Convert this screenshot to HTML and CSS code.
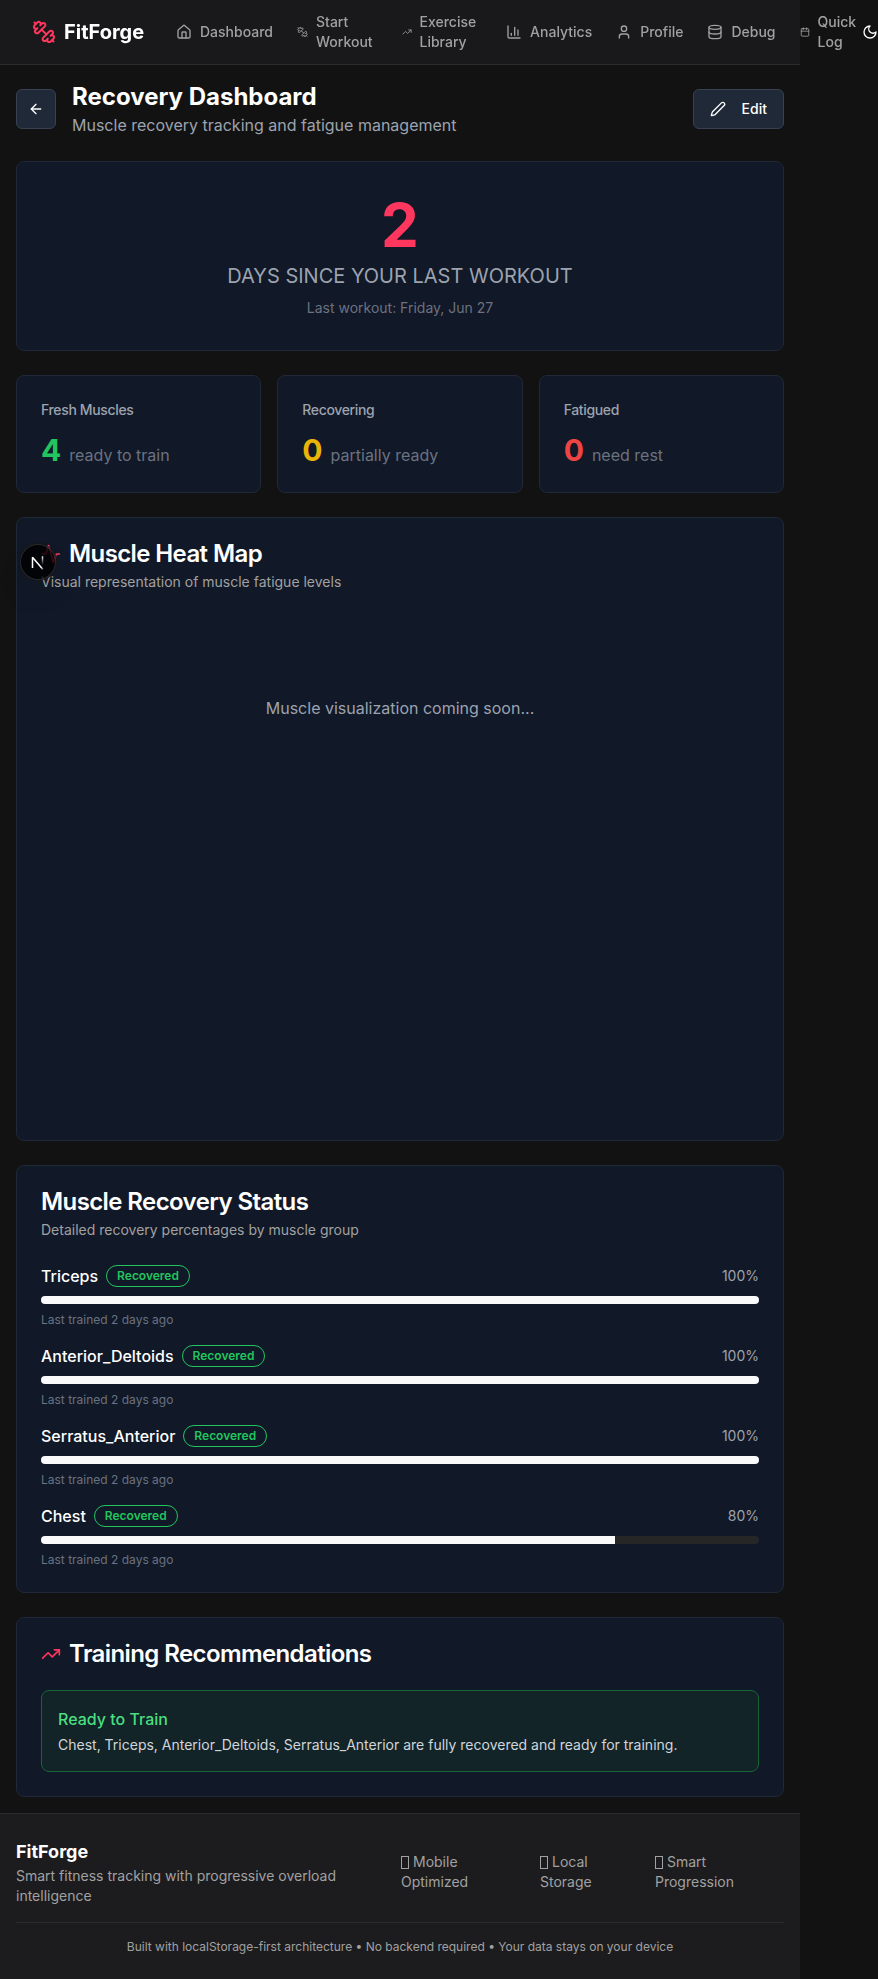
FILE: index.html
```html
<!DOCTYPE html>
<html lang="en">
<head>
<meta charset="utf-8">
<title>FitForge</title>
<link rel="stylesheet" href="styles.css">
</head>
<body>
<svg class="sprite" width="0" height="0">
  <symbol id="dumbbell" viewBox="0 0 24 24"><path d="M14.4 14.4 9.6 9.6"/><path d="M18.657 21.485a2 2 0 1 1-2.829-2.828l-1.767 1.768a2 2 0 1 1-2.829-2.829l6.364-6.364a2 2 0 1 1 2.829 2.829l-1.768 1.767a2 2 0 1 1 2.828 2.829z"/><path d="m21.5 21.5-1.4-1.4"/><path d="M3.9 3.9 2.5 2.5"/><path d="M6.404 12.768a2 2 0 1 1-2.829-2.829l1.768-1.767a2 2 0 1 1-2.828-2.829l2.828-2.828a2 2 0 1 1 2.829 2.828l1.767-1.768a2 2 0 1 1 2.829 2.829z"/></symbol>
  <symbol id="home" viewBox="0 0 24 24"><path d="M15 21v-8a1 1 0 0 0-1-1h-4a1 1 0 0 0-1 1v8"/><path d="M3 10a2 2 0 0 1 .709-1.528l7-5.999a2 2 0 0 1 2.582 0l7 5.999A2 2 0 0 1 21 10v9a2 2 0 0 1-2 2H5a2 2 0 0 1-2-2z"/></symbol>
  <symbol id="trend" viewBox="0 0 24 24"><path d="m22 7-8.500 8.500-5-5L2 17"/><path d="M16 7h6v6"/></symbol>
  <symbol id="chart" viewBox="0 0 24 24"><path d="M3 3v16a2 2 0 0 0 2 2h16"/><path d="M18 17V9"/><path d="M13 17V5"/><path d="M8 17v-3"/></symbol>
  <symbol id="user" viewBox="0 0 24 24"><path d="M19 21v-2a4 4 0 0 0-4-4H9a4 4 0 0 0-4 4v2"/><circle cx="12" cy="7" r="4"/></symbol>
  <symbol id="database" viewBox="0 0 24 24"><ellipse cx="12" cy="5" rx="9" ry="3"/><path d="M3 5v14a9 3 0 0 0 18 0V5"/><path d="M3 12a9 3 0 0 0 18 0"/></symbol>
  <symbol id="calendar" viewBox="0 0 24 24"><path d="M8 2v4"/><path d="M16 2v4"/><rect width="18" height="18" x="3" y="4" rx="2"/><path d="M3 10h18"/></symbol>
  <symbol id="moon" viewBox="0 0 24 24"><path d="M12 3a6 6 0 0 0 9 9 9 9 0 1 1-9-9Z"/></symbol>
  <symbol id="back" viewBox="0 0 24 24"><path d="m12 19-7-7 7-7"/><path d="M19 12H5"/></symbol>
  <symbol id="pencil" viewBox="0 0 24 24"><path d="M21.174 6.812a1 1 0 0 0-3.986-3.987L3.842 16.174a2 2 0 0 0-.5.830l-1.321 4.352a.5.5 0 0 0 .623.622l4.353-1.320a2 2 0 0 0 .830-.497z"/></symbol>
  <symbol id="activity" viewBox="0 0 24 24"><path d="M22 12h-2.480a2 2 0 0 0-1.930 1.460l-2.350 8.360a.25.25 0 0 1-.48 0L9.240 2.180a.25.25 0 0 0-.48 0l-2.350 8.360A2 2 0 0 1 4.490 12H2"/></symbol>
</svg>

<div class="page">
<header class="navbar">
  <a class="brand"><svg class="icon icon-lg"><use href="#dumbbell"/></svg><span>FitForge</span></a>
  <nav class="nav">
    <a class="nav-item"><svg class="icon"><use href="#home"/></svg><span>Dashboard</span></a>
    <a class="nav-item"><svg class="icon icon-start"><use href="#dumbbell"/></svg><span class="label-start">Start Workout</span></a>
    <a class="nav-item"><svg class="icon icon-small"><use href="#trend"/></svg><span class="label-library">Exercise Library</span></a>
    <a class="nav-item"><svg class="icon"><use href="#chart"/></svg><span>Analytics</span></a>
    <a class="nav-item"><svg class="icon"><use href="#user"/></svg><span>Profile</span></a>
    <a class="nav-item"><svg class="icon"><use href="#database"/></svg><span>Debug</span></a>
    <a class="nav-item"><svg class="icon icon-small"><use href="#calendar"/></svg><span class="label-log">Quick Log</span></a>
  </nav>
  <svg class="icon theme-toggle"><use href="#moon"/></svg>
</header>

<main class="main">
  <div class="page-head">
    <button class="btn btn-square"><svg class="icon"><use href="#back"/></svg></button>
    <div class="page-title">
      <h1>Recovery Dashboard</h1>
      <p>Muscle recovery tracking and fatigue management</p>
    </div>
    <button class="btn btn-edit"><svg class="icon"><use href="#pencil"/></svg><span>Edit</span></button>
  </div>

  <section class="card hero">
    <div class="hero-number">2</div>
    <div class="hero-label">DAYS SINCE YOUR LAST WORKOUT</div>
    <div class="hero-date">Last workout: Friday, Jun 27</div>
  </section>

  <div class="stats">
    <section class="card stat"><h3>Fresh Muscles</h3><p><b class="green">4</b><span>ready to train</span></p></section>
    <section class="card stat"><h3>Recovering</h3><p><b class="yellow">0</b><span>partially ready</span></p></section>
    <section class="card stat"><h3>Fatigued</h3><p><b class="red">0</b><span>need rest</span></p></section>
  </div>

  <section class="card heatmap">
    <h2><svg class="icon icon-md"><use href="#activity"/></svg>Muscle Heat Map</h2>
    <p class="card-desc">Visual representation of muscle fatigue levels</p>
    <div class="heatmap-body">Muscle visualization coming soon...</div>
    <div class="dev-badge">
      <svg width="36" height="36" viewBox="0 0 36 36" fill="none">
        <defs>
          <linearGradient id="fade-a" x1="18" y1="19" x2="24" y2="26" gradientUnits="userSpaceOnUse"><stop stop-color="#fff"/><stop offset=".6" stop-color="#fff"/><stop offset="1" stop-color="#fff" stop-opacity="0"/></linearGradient>
          <linearGradient id="fade-b" x1="0" y1="12" x2="0" y2="21" gradientUnits="userSpaceOnUse"><stop stop-color="#fff"/><stop offset="1" stop-color="#fff" stop-opacity="0"/></linearGradient>
        </defs>
        <path d="M12.500 24V13.200L23 25.500" stroke="url(#fade-a)" stroke-width="1.500" stroke-linejoin="bevel"/>
        <path d="M22.500 12.300v9" stroke="url(#fade-b)" stroke-width="1.500"/>
      </svg>
    </div>
  </section>

  <section class="card">
    <h2>Muscle Recovery Status</h2>
    <p class="card-desc">Detailed recovery percentages by muscle group</p>
    <div class="muscles">
      <div class="muscle">
        <div class="muscle-row"><span class="muscle-name">Triceps</span><span class="badge">Recovered</span><span class="percent">100%</span></div>
        <div class="progress"><div class="fill" style="width:100%"></div></div>
        <p>Last trained 2 days ago</p>
      </div>
      <div class="muscle">
        <div class="muscle-row"><span class="muscle-name">Anterior_Deltoids</span><span class="badge">Recovered</span><span class="percent">100%</span></div>
        <div class="progress"><div class="fill" style="width:100%"></div></div>
        <p>Last trained 2 days ago</p>
      </div>
      <div class="muscle">
        <div class="muscle-row"><span class="muscle-name">Serratus_Anterior</span><span class="badge">Recovered</span><span class="percent">100%</span></div>
        <div class="progress"><div class="fill" style="width:100%"></div></div>
        <p>Last trained 2 days ago</p>
      </div>
      <div class="muscle">
        <div class="muscle-row"><span class="muscle-name">Chest</span><span class="badge">Recovered</span><span class="percent">80%</span></div>
        <div class="progress"><div class="fill" style="width:80%"></div></div>
        <p>Last trained 2 days ago</p>
      </div>
    </div>
  </section>

  <section class="card">
    <h2><svg class="icon icon-md"><use href="#trend"/></svg>Training Recommendations</h2>
    <div class="notice">
      <h4>Ready to Train</h4>
      <p>Chest, Triceps, Anterior_Deltoids, Serratus_Anterior are fully recovered and ready for training.</p>
    </div>
  </section>
</main>

<footer class="footer">
  <div class="footer-top">
    <div class="footer-brand">
      <h3>FitForge</h3>
      <p>Smart fitness tracking with progressive overload intelligence</p>
    </div>
    <div class="features">
      <span><i class="glyph"></i>Mobile<br>Optimized</span>
      <span><i class="glyph"></i>Local<br>Storage</span>
      <span><i class="glyph"></i>Smart<br>Progression</span>
    </div>
  </div>
  <div class="footer-note">Built with localStorage-first architecture • No backend required • Your data stays on your device</div>
</footer>
</div>
</body>
</html>
```
FILE: styles.css
```css
* { box-sizing: border-box; margin: 0; padding: 0; }
html { background: #121212; }
body {
  font-family: Inter, "Liberation Sans", sans-serif;
  font-size: 16px;
  line-height: 24px;
  color: #fff;
  background: #121212;
}
.page { width: 800px; }
.sprite { position: absolute; }
.icon {
  flex: none;
  width: 16px;
  height: 16px;
  fill: none;
  stroke: currentColor;
  stroke-width: 2;
  stroke-linecap: round;
  stroke-linejoin: round;
}
.icon-lg { width: 24px; height: 24px; color: #ff375f; }
.icon-md { width: 20px; height: 20px; color: #ff375f; }

.navbar {
  display: flex;
  align-items: center;
  height: 65px;
  padding-left: 32px;
  background: rgba(28, 28, 30, 0.8);
  border-bottom: 1px solid #2c2c2e;
  backdrop-filter: blur(12px);
}
.brand { display: flex; align-items: center; gap: 8px; flex: none; width: 132px; font-size: 20px; font-weight: 700; line-height: 28px; }
.nav { display: flex; flex: none; align-items: center; }
.nav-item {
  display: flex;
  flex: none;
  align-items: center;
  gap: 8px;
  padding: 0 12px;
  font-size: 14px;
  font-weight: 500;
  line-height: 20px;
  color: #a1a1a1;
}
.icon-start { width: 11px; }
.icon-small { width: 10px; }
.label-start { width: 61.500px; }
.label-library { width: 62.600px; }
.label-log { width: 43.400px; }
.theme-toggle { margin-left: -11px; }

.main { display: flex; flex-direction: column; gap: 24px; padding: 16px; }
.page-head { display: flex; align-items: center; gap: 16px; }
.page-title { flex: 1; }
.page-title h1 { font-size: 24px; font-weight: 700; line-height: 32px; }
.page-title p { color: #9ca3af; }
.btn {
  display: flex;
  align-items: center;
  justify-content: center;
  height: 40px;
  border: 1px solid #374151;
  border-radius: 6px;
  background: #1f2937;
  color: #fff;
  font: 500 14px/20px Inter, sans-serif;
}
.btn-square { width: 40px; }
.btn-edit { gap: 16px; padding: 0 16px; }

.card { position: relative; padding: 24px; border: 1px solid #1f2937; border-radius: 8px; background: #111827; }
.card h2 { display: flex; align-items: center; gap: 8px; font-size: 24px; font-weight: 600; line-height: 24px; letter-spacing: -0.6px; }
.card-desc { margin-top: 6px; font-size: 14px; line-height: 20px; color: #a1a1a1; }

.hero { padding: 32px; text-align: center; }
.hero-number { padding-top: 1px; font-size: 60px; font-weight: 700; line-height: 60px; color: #ff375f; }
.hero-label { margin-top: 7px; font-size: 20px; line-height: 28px; color: #9ca3af; }
.hero-date { margin-top: 8px; font-size: 14px; line-height: 20px; color: #6b7280; }

.stats { display: grid; grid-template-columns: repeat(3, 1fr); gap: 16px; }
.stat h3 { font-size: 14px; font-weight: 500; line-height: 20px; letter-spacing: -0.35px; color: #9ca3af; }
.stat p { display: flex; align-items: baseline; gap: 8px; height: 36px; margin-top: 12px; color: #6b7280; }
.stat b { font-size: 30px; line-height: 36px; }
.green { color: #22c55e; }
.yellow { color: #eab308; }
.red { color: #ef4444; }

.heatmap-body { height: 500px; margin-top: 24px; padding-top: 80px; text-align: center; color: #9ca3af; }
.dev-badge {
  position: absolute;
  left: 3px;
  top: 26px;
  width: 36px;
  height: 36px;
  border-radius: 50%;
  background: rgba(0, 0, 0, 0.8);
  box-shadow: 0 0 0 1px #171717, inset 0 0 0 1px rgba(255, 255, 255, 0.14), 0 16px 32px -8px rgba(0, 0, 0, 0.24);
}
.dev-badge svg { display: block; }

.muscles { display: flex; flex-direction: column; gap: 16px; margin-top: 24px; }
.muscle-row { display: flex; align-items: center; gap: 8px; height: 24px; }
.muscle-name { font-weight: 500; }
.badge { padding: 2px 10px; border: 1px solid #22c55e; border-radius: 11px; font-size: 12px; font-weight: 600; line-height: 16px; color: #22c55e; }
.percent { margin-left: auto; font-size: 14px; line-height: 20px; color: #9ca3af; }
.progress { height: 8px; margin-top: 8px; border-radius: 4px; background: #262626; overflow: hidden; }
.fill { height: 100%; background: #fafafa; }
.muscle p { margin-top: 8px; font-size: 12px; line-height: 16px; color: #6b7280; }

.notice { margin-top: 24px; padding: 16px; border: 1px solid #166534; border-radius: 8px; background: #122428; }
.notice h4 { font-weight: 500; color: #4ade80; }
.notice p { margin-top: 4px; font-size: 14px; line-height: 20px; color: #d1d5db; }

.footer { padding: 24px 16px; border-top: 1px solid #2c2c2e; background: #1c1c1e; color: #a1a1a1; }
.footer-top { display: flex; align-items: center; height: 68px; font-size: 14px; line-height: 20px; }
.footer-brand { width: 385px; padding-right: 50px; }
.footer-brand h3 { font-size: 18px; font-weight: 700; line-height: 28px; color: #fff; }
.features { display: grid; grid-template-columns: 139px 115px auto; }
.glyph { display: inline-block; width: 8px; height: 13px; margin-right: 4px; border: 1px solid currentColor; vertical-align: -2px; }
.footer-note { margin-top: 16px; padding-top: 16px; border-top: 1px solid #2c2c2e; text-align: center; font-size: 12px; line-height: 16px; }
```
